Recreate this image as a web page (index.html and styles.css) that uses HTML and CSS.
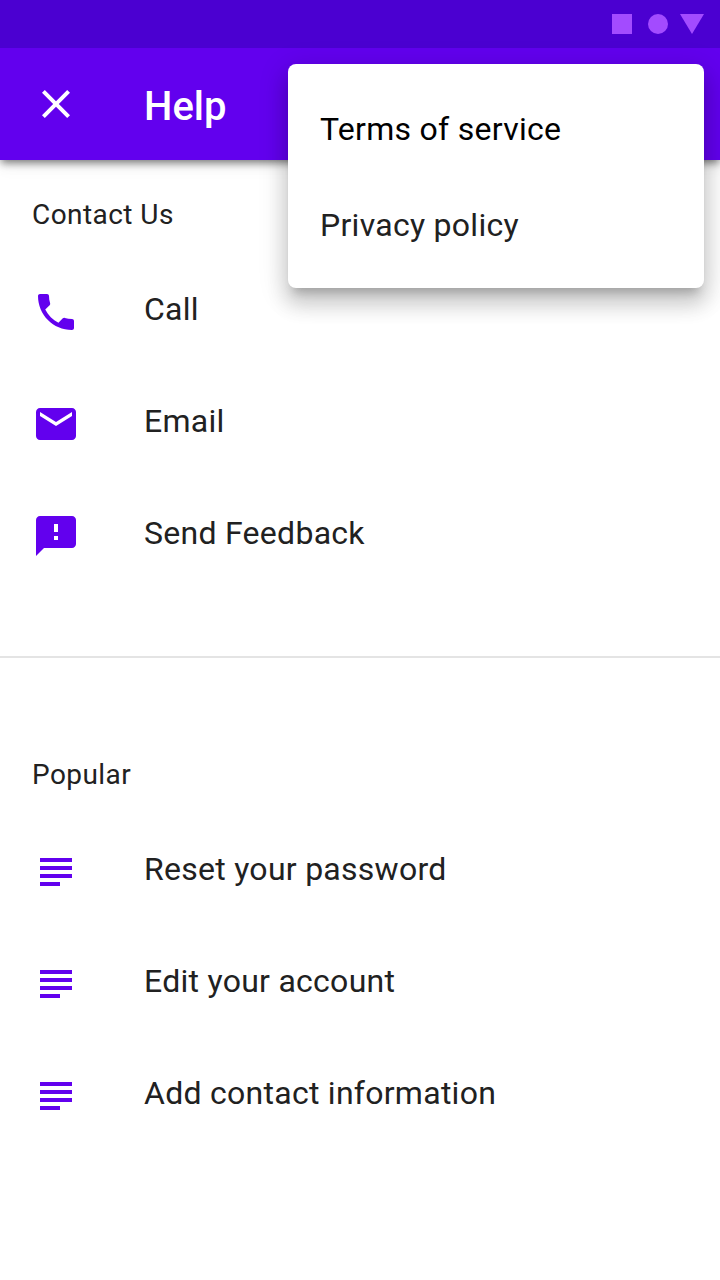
FILE: index.html
```html
<!DOCTYPE html>
<html lang="en">
<head>
<meta charset="utf-8">
<title>Help</title>
<link rel="stylesheet" href="styles.css">
</head>
<body>
<div class="screen">
  <div class="status-bar">
    <svg width="92" height="20" viewBox="0 0 92 20" fill="#a34bff" aria-hidden="true"><path d="M0 0h20v20H0z"/><circle cx="46" cy="10" r="10"/><path d="M68 0h24L80 20z"/></svg>
  </div>
  <header class="app-bar">
    <svg class="icon" viewBox="0 0 24 24"><path d="M19 6.41L17.59 5 12 10.59 6.41 5 5 6.41 10.59 12 5 17.59 6.41 19 12 13.41 17.59 19 19 17.59 13.41 12z"/></svg>
    <h1 class="title">Help</h1>
  </header>
  <nav class="menu">
    <a class="menu-item menu-item-active">Terms of service</a>
    <a class="menu-item">Privacy policy</a>
  </nav>
  <main>
    <section class="group group-contact">
      <h2 class="subheader">Contact Us</h2>
      <ul class="list">
        <li class="row"><svg class="icon" viewBox="0 0 24 24"><path d="M6.62 10.79c1.44 2.83 3.76 5.14 6.59 6.59l2.2-2.2c.27-.27.67-.36 1.02-.24 1.12.37 2.33.57 3.57.57.55 0 1 .45 1 1V20c0 .55-.45 1-1 1-9.39 0-17-7.61-17-17 0-.55.45-1 1-1h3.5c.55 0 1 .45 1 1 0 1.25.2 2.45.57 3.57.11.35.03.74-.25 1.02l-2.2 2.2z"/></svg><span class="label">Call</span></li>
        <li class="row"><svg class="icon" viewBox="0 0 24 24"><path d="M20 4H4c-1.1 0-1.99.9-1.99 2L2 18c0 1.1.9 2 2 2h16c1.1 0 2-.9 2-2V6c0-1.1-.9-2-2-2zm0 4l-8 5-8-5V6l8 5 8-5v2z"/></svg><span class="label">Email</span></li>
        <li class="row"><svg class="icon" viewBox="0 0 24 24"><path d="M20 2H4c-1.1 0-1.99.9-1.99 2L2 22l4-4h14c1.1 0 2-.9 2-2V4c0-1.1-.9-2-2-2zm-7 12h-2v-2h2v2zm0-4h-2V6h2v4z"/></svg><span class="label">Send Feedback</span></li>
      </ul>
    </section>
    <section class="group group-popular">
      <h2 class="subheader">Popular</h2>
      <ul class="list">
        <li class="row"><svg class="icon" viewBox="0 0 24 24"><path d="M4 5h16v2H4zM4 9h16v2H4zM4 13h16v2H4zM4 17h10v2H4z"/></svg><span class="label">Reset your password</span></li>
        <li class="row"><svg class="icon" viewBox="0 0 24 24"><path d="M4 5h16v2H4zM4 9h16v2H4zM4 13h16v2H4zM4 17h10v2H4z"/></svg><span class="label">Edit your account</span></li>
        <li class="row"><svg class="icon" viewBox="0 0 24 24"><path d="M4 5h16v2H4zM4 9h16v2H4zM4 13h16v2H4zM4 17h10v2H4z"/></svg><span class="label">Add contact information</span></li>
      </ul>
    </section>
  </main>
</div>
</body>
</html>
```
FILE: styles.css
```css
* { box-sizing: border-box; }
body { margin: 0; background: #fff; font-family: Roboto, sans-serif; color: #212121; }
.screen { position: relative; width: 720px; height: 1280px; overflow: hidden; }
.status-bar { display: flex; justify-content: flex-end; height: 48px; padding: 14px 16px; background: #4b00d1; }
.app-bar { display: flex; align-items: center; gap: 64px; height: 112px; padding: 0 32px; background: #6200ee; color: #fff; box-shadow: 0 4px 8px -1px rgba(0,0,0,.5), 0 2px 20px rgba(0,0,0,.08); clip-path: inset(0 0 -40px 0); }
.icon { width: 48px; height: 48px; flex: none; fill: currentColor; }
.title { margin: 6px 0 0; font-size: 40px; line-height: 48px; font-weight: 500; }
.menu { position: absolute; top: 64px; right: 16px; width: 416px; height: 224px; padding: 17px 0 15px; border-radius: 8px; background: #fff; box-shadow: 0 10px 10px -6px rgba(0,0,0,.2), 0 16px 20px 2px rgba(0,0,0,.14), 0 6px 28px 4px rgba(0,0,0,.12); }
.menu-item { display: flex; align-items: center; height: 96px; padding: 0 32px; font-size: 32px; letter-spacing: .28px; }
.menu-item-active { color: #000; }
.group-contact { height: 498px; border-bottom: 2px solid #e4e4e4; }
.group-popular { padding-top: 62px; }
.subheader { margin: 0; padding: 38px 32px 0; height: 96px; font-size: 28px; line-height: 34px; font-weight: 400; letter-spacing: .44px; }
.list { margin: 0; padding: 0; list-style: none; }
.row { display: flex; align-items: center; gap: 64px; height: 112px; padding: 0 32px; }
.row .icon { fill: #6200ee; }
.label { font-size: 32px; line-height: 40px; letter-spacing: .27px; margin-bottom: 6px; }
```
